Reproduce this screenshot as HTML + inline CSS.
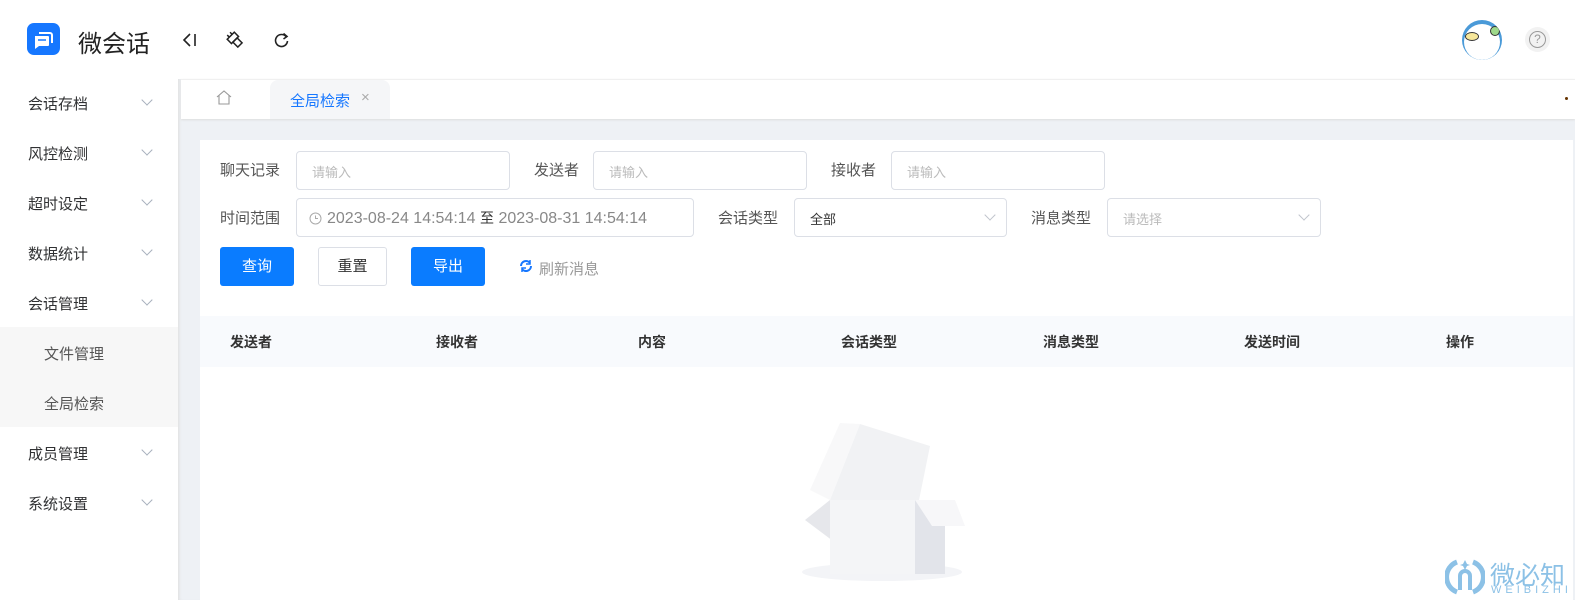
<!DOCTYPE html>
<html><head><meta charset="utf-8"><style>
*{margin:0;padding:0;box-sizing:border-box}
body{width:1575px;height:600px;overflow:hidden;background:#fff;font-family:"Liberation Sans","Noto Sans CJK SC",sans-serif;color:#333;position:relative}
.a{position:absolute}
.menu{font-size:15px;color:#303133;left:28px}
.chev{left:143px;width:8px;height:8px;border-right:1px solid #a8b0bd;border-bottom:1px solid #a8b0bd;transform:rotate(45deg)}
.lbl{font-size:15px;color:#555}
.inp{border:1px solid #dcdfe6;border-radius:4px;background:#fff;height:39px}
.ph{font-size:13px;color:#bbb;position:absolute;left:15px;top:10px}
.btn{border-radius:3px;height:39px;font-size:15px;text-align:center;line-height:39px}
.th{font-size:14px;font-weight:bold;color:#333;top:332px}
.sel:after{content:"";position:absolute;right:12px;top:12px;width:7px;height:7px;border-right:1px solid #c0c4cc;border-bottom:1px solid #c0c4cc;transform:rotate(45deg)}
</style></head><body>
<!-- header -->
<div class="a" style="left:27px;top:23px;width:33px;height:32px;background:#1677ff;border-radius:7px"></div>
<svg class="a" style="left:27px;top:23px" width="33" height="32" viewBox="0 0 33 32"><path d="M12 10h11a2 2 0 0 1 2 2v8" fill="none" stroke="#fff" stroke-width="2"/><path d="M8 13h13a1 1 0 0 1 1 1v8a1 1 0 0 1-1 1H12l-4 3z" fill="#fff"/><path d="M11 17h8" stroke="#1677ff" stroke-width="1.5"/></svg>
<div class="a" style="left:78px;top:24px;font-size:24px;color:#222">微会话</div>
<svg class="a" style="left:180px;top:30px" width="120" height="20" viewBox="0 0 120 20"><path d="M10 4 4 10l6 6M15 4v12" fill="none" stroke="#222" stroke-width="1.6"/><g transform="translate(55 10) rotate(-45)" fill="none" stroke="#222" stroke-width="1.5"><rect x="-5" y="-6" width="10" height="6"/><rect x="-3" y="0" width="6" height="7"/><path d="M-2 -6v-3M2 -6v-3"/></g><path d="M106 6.5a6 6 0 1 0 1.5 4.5" fill="none" stroke="#222" stroke-width="1.6"/><path d="M103.5 3.5l3.5 3-3.5 2.5" fill="none" stroke="#222" stroke-width="1.6"/></svg>
<div class="a" style="left:1462px;top:20px;width:40px;height:40px;border-radius:50%;background:#4a9ad8;overflow:hidden"><div class="a" style="left:2px;top:4px;width:36px;height:36px;border-radius:50%;background:#fff"></div><div class="a" style="left:3px;top:12px;width:14px;height:9px;border-radius:50%;background:#f7e79a;border:1px solid #333"></div><div class="a" style="left:28px;top:6px;width:10px;height:10px;border-radius:50%;background:#9ed88a;border:1px solid #333"></div></div>
<div class="a" style="left:1525px;top:27px;width:25px;height:25px;border-radius:50%;background:#f2f2f2"><div class="a" style="left:4px;top:4px;width:17px;height:17px;border-radius:50%;border:1px solid #999;font-size:12px;color:#999;text-align:center;line-height:15px">?</div></div>
<!-- sidebar -->
<div class="a" style="left:0;top:327px;width:178px;height:100px;background:#f7f7f7"></div>
<div class="a menu" style="top:93px">会话存档</div><div class="a chev" style="top:96px"></div>
<div class="a menu" style="top:143px">风控检测</div><div class="a chev" style="top:146px"></div>
<div class="a menu" style="top:193px">超时设定</div><div class="a chev" style="top:196px"></div>
<div class="a menu" style="top:243px">数据统计</div><div class="a chev" style="top:246px"></div>
<div class="a menu" style="top:293px">会话管理</div><div class="a chev" style="top:296px"></div>
<div class="a menu" style="top:343px;left:44px;color:#555">文件管理</div>
<div class="a menu" style="top:393px;left:44px;color:#555">全局检索</div>
<div class="a menu" style="top:443px">成员管理</div><div class="a chev" style="top:446px"></div>
<div class="a menu" style="top:493px">系统设置</div><div class="a chev" style="top:496px"></div>
<!-- main -->
<div class="a" style="left:178px;top:79px;width:1397px;height:521px;background:#eef1f5;box-shadow:inset 3px 0 3px -2px #ddd"></div>
<div class="a" style="left:181px;top:79px;width:1394px;height:40px;background:#fff;border-top:1px solid #f0f0f0;box-shadow:0 1px 2px #ddd"></div>
<svg class="a" style="left:215px;top:89px" width="18" height="17" viewBox="0 0 18 17"><path d="M2 8 9 2l7 6M4 6.5V15h10V6.5" fill="none" stroke="#999" stroke-width="1.1"/></svg>
<div class="a" style="left:270px;top:80px;width:120px;height:39px;background:#f5f6f8;border-radius:8px 8px 0 0"></div>
<div class="a" style="left:290px;top:90px;font-size:15px;color:#1677ff">全局检索</div>
<div class="a" style="left:361px;top:89px;font-size:15px;color:#aaa">×</div>
<div class="a" style="left:1565px;top:97px;width:3px;height:3px;background:#630;border-radius:50%"></div>
<div class="a" style="left:200px;top:140px;width:1373px;height:460px;background:#fff"></div>
<div class="a lbl" style="left:220px;top:159px">聊天记录</div>
<div class="a inp" style="left:296px;top:151px;width:214px"><span class="ph">请输入</span></div>
<div class="a lbl" style="left:534px;top:159px">发送者</div>
<div class="a inp" style="left:593px;top:151px;width:214px"><span class="ph">请输入</span></div>
<div class="a lbl" style="left:831px;top:159px">接收者</div>
<div class="a inp" style="left:891px;top:151px;width:214px"><span class="ph">请输入</span></div>
<div class="a lbl" style="left:220px;top:207px">时间范围</div>
<div class="a inp" style="left:296px;top:198px;width:398px"><svg class="a" style="left:12px;top:13px" width="13" height="13" viewBox="0 0 13 13"><circle cx="6.5" cy="6.5" r="5.5" fill="none" stroke="#aaa"/><path d="M6.5 3.5v3h2.5" fill="none" stroke="#aaa"/></svg><span class="a" style="left:30px;top:9px;font-size:16px;color:#888">2023-08-24 14:54:14 <span style="color:#333;font-size:14px">至</span> 2023-08-31 14:54:14</span></div>
<div class="a lbl" style="left:718px;top:207px">会话类型</div>
<div class="a inp sel" style="left:794px;top:198px;width:213px"><span class="ph" style="color:#333">全部</span></div>
<div class="a lbl" style="left:1031px;top:207px">消息类型</div>
<div class="a inp sel" style="left:1107px;top:198px;width:214px"><span class="ph">请选择</span></div>
<div class="a btn" style="left:220px;top:247px;width:74px;background:#0a7cff;color:#fff">查询</div>
<div class="a btn" style="left:318px;top:247px;width:69px;border:1px solid #dcdfe6;color:#333;line-height:37px">重置</div>
<div class="a btn" style="left:411px;top:247px;width:74px;background:#0a7cff;color:#fff">导出</div>
<svg class="a" style="left:519px;top:259px" width="14" height="14" viewBox="0 0 14 14"><path d="M2 7a5 5 0 0 1 9-3M12 7a5 5 0 0 1-9 3" fill="none" stroke="#1677ff" stroke-width="2"/><path d="M11 1v4H7M3 13V9h4" fill="none" stroke="#1677ff" stroke-width="1.5"/></svg>
<div class="a" style="left:539px;top:258px;font-size:15px;color:#999">刷新消息</div>
<div class="a" style="left:200px;top:316px;width:1373px;height:51px;background:#f8fafd"></div>
<div class="a th" style="left:230px">发送者</div><div class="a th" style="left:436px">接收者</div><div class="a th" style="left:638px">内容</div><div class="a th" style="left:841px">会话类型</div><div class="a th" style="left:1043px">消息类型</div><div class="a th" style="left:1244px">发送时间</div><div class="a th" style="left:1446px">操作</div>
<svg class="a" style="left:800px;top:420px" width="165" height="165" viewBox="0 0 165 165"><ellipse cx="82" cy="152" rx="80" ry="9" fill="#f3f4f7"/><path d="M5 100 30 80h15v50z" fill="#e6e7eb"/><path d="M30 80 60 4l70 22-15 74z" fill="#f1f2f4"/><path d="M30 80 60 4 40 3 10 70z" fill="#f8f8f9"/><rect x="30" y="80" width="85" height="74" fill="#f4f5f7"/><path d="M115 80h30v74h-30z" fill="#e2e4ea"/><path d="M115 80h40l10 26h-33z" fill="#f7f7f9"/></svg>
<svg class="a" style="left:1445px;top:556px" width="40" height="40" viewBox="0 0 40 40"><path d="M12 6a16 16 0 0 0 0 30M28 6a16 16 0 0 1 0 30" fill="none" stroke="#8cc1e6" stroke-width="5"/><path d="M15 34V20a5 5 0 0 1 10 0v14" fill="none" stroke="#8cc1e6" stroke-width="4"/><path d="M20 4l2 4 3 1-3 1-2 4-2-4-3-1 3-1z" fill="#8cc1e6"/></svg>
<div class="a" style="left:1490px;top:556px;font-size:25px;color:#8cc1e6;white-space:nowrap">微必知</div>
<div class="a" style="left:1491px;top:584px;font-size:11px;color:#8cc1e6;letter-spacing:4px;white-space:nowrap">WEIBIZHI</div>
</body></html>
